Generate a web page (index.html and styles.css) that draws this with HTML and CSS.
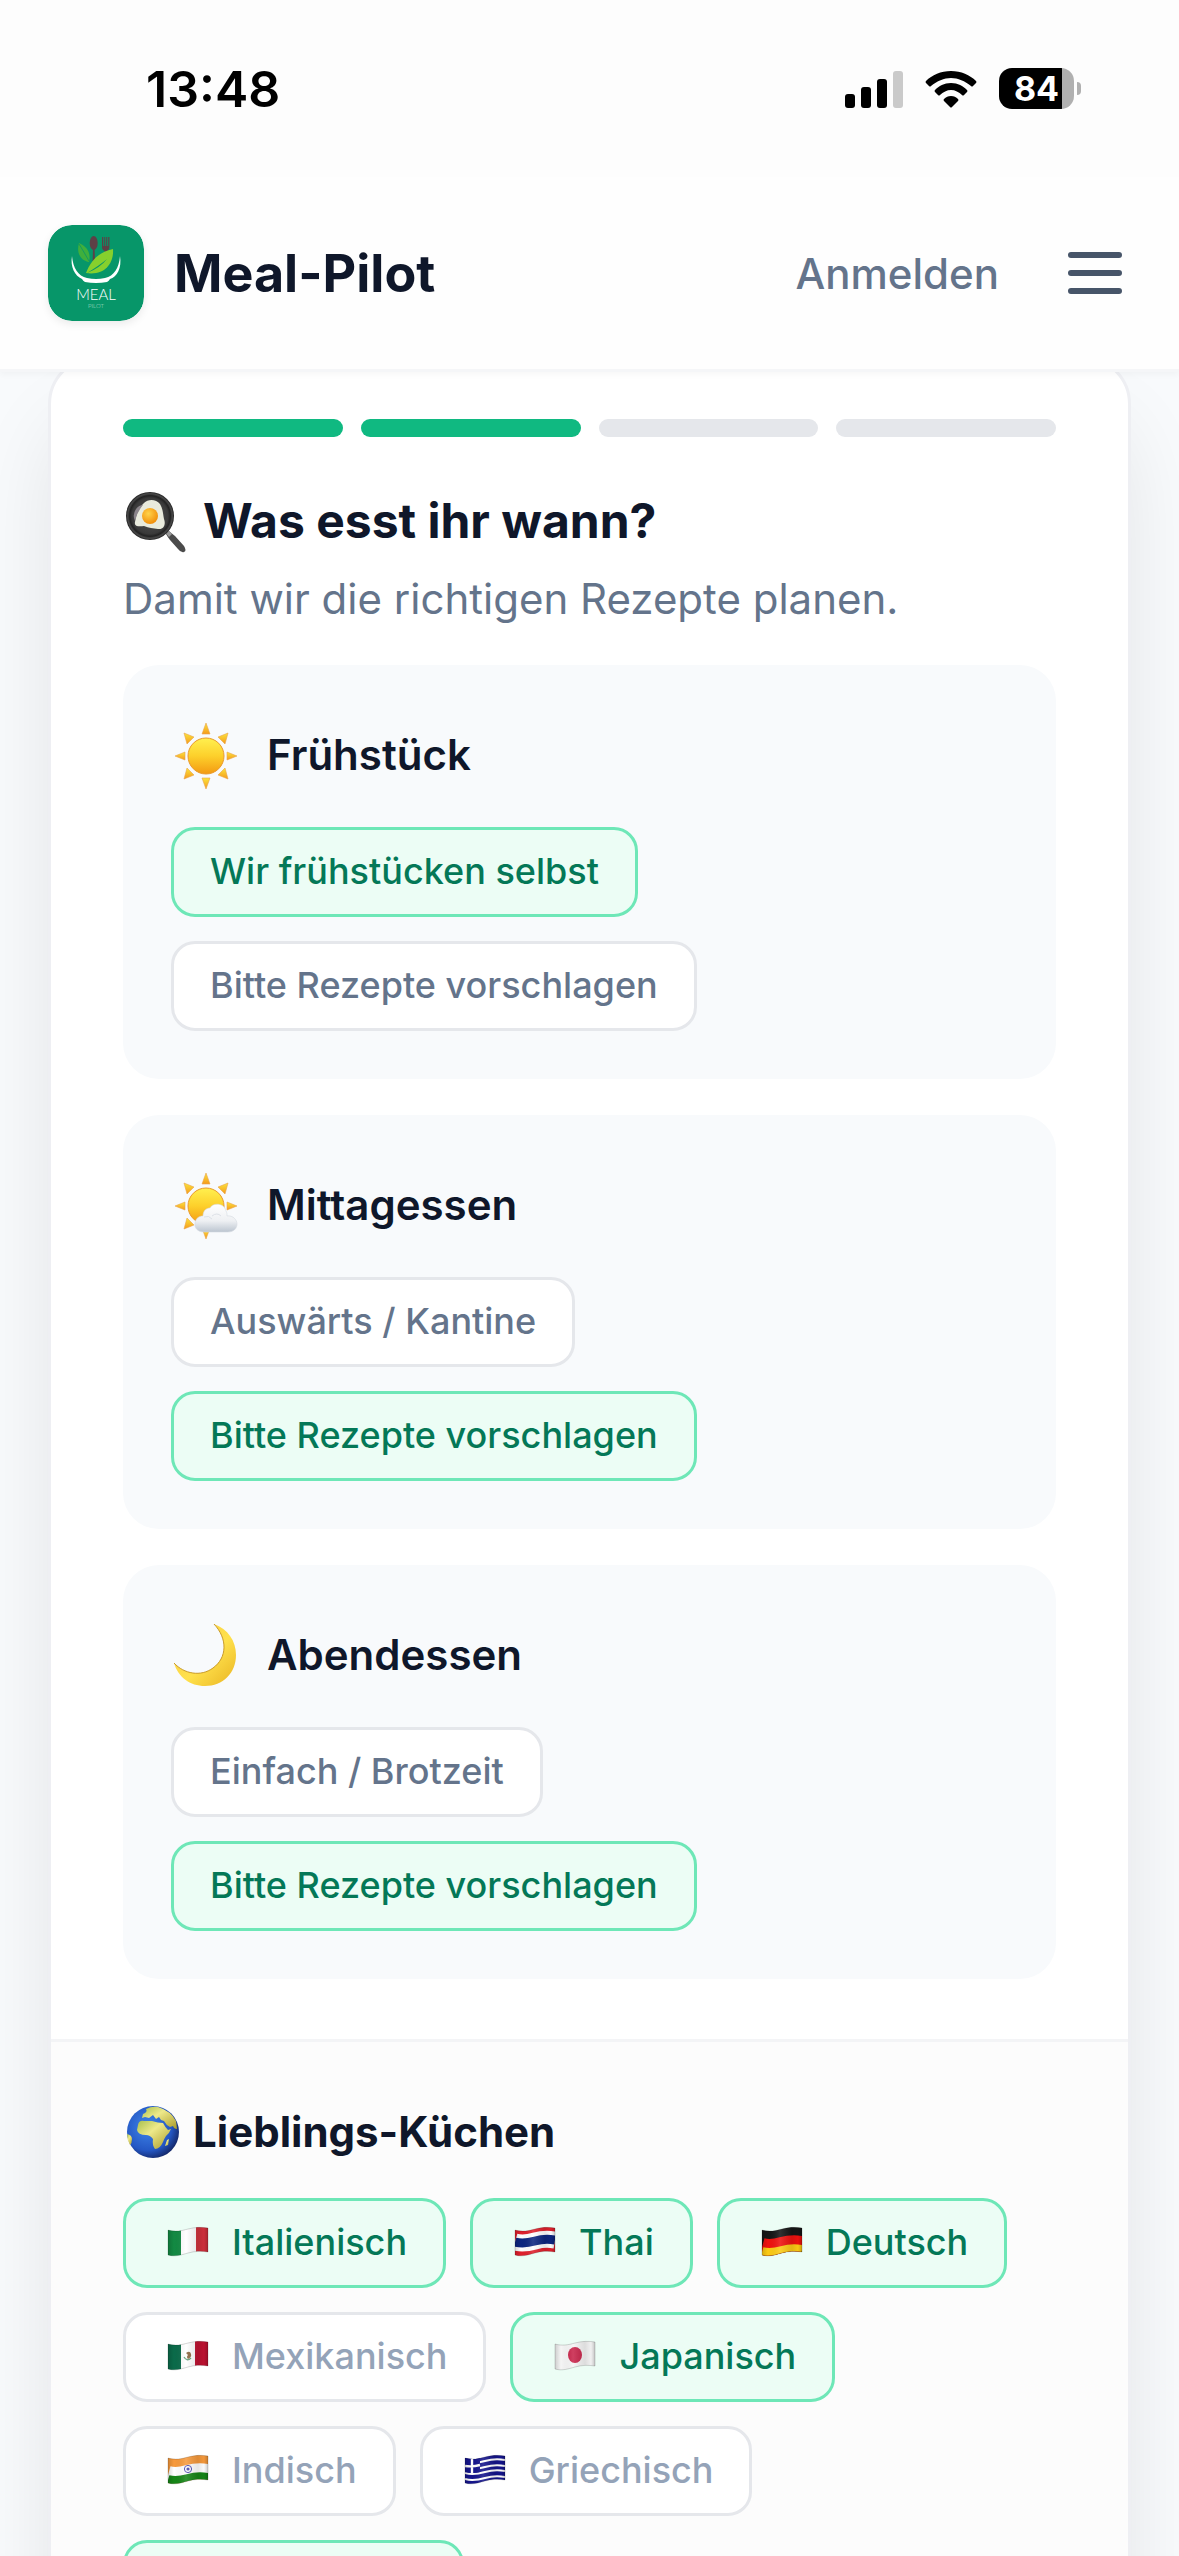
FILE: index.html
```html
<!DOCTYPE html>
<html lang="de">
<head>
<meta charset="UTF-8" />
<meta name="viewport" content="width=device-width, initial-scale=1" />
<title>Meal-Pilot</title>
<link rel="stylesheet" href="styles.css">
</head>
<body>

<!-- shared gradients and the waving flag shape -->
<svg class="defs" width="0" height="0" aria-hidden="true">
  <defs>
    <linearGradient id="sunFill" x1="0" y1="0" x2="0" y2="1">
      <stop offset="0" stop-color="#fff04f"/>
      <stop offset="0.5" stop-color="#fdd02b"/>
      <stop offset="1" stop-color="#f39a12"/>
    </linearGradient>
    <linearGradient id="rayFill" x1="0" y1="0" x2="0" y2="1">
      <stop offset="0" stop-color="#fbe53c"/>
      <stop offset="1" stop-color="#f59a1c"/>
    </linearGradient>
    <linearGradient id="cloudFill" x1="0" y1="0" x2="0" y2="1">
      <stop offset="0" stop-color="#ffffff"/>
      <stop offset="0.6" stop-color="#eef0f3"/>
      <stop offset="1" stop-color="#bcc5d0"/>
    </linearGradient>
    <linearGradient id="moonFill" x1="0" y1="0" x2="1" y2="1">
      <stop offset="0" stop-color="#f6c944"/>
      <stop offset="0.55" stop-color="#ffe14c"/>
      <stop offset="1" stop-color="#e9b422"/>
    </linearGradient>
    <radialGradient id="panFill">
      <stop offset="0" stop-color="#555"/>
      <stop offset="0.75" stop-color="#3a3a3a"/>
      <stop offset="0.85" stop-color="#222"/>
      <stop offset="0.93" stop-color="#4a4a4a"/>
      <stop offset="1" stop-color="#1c1c1c"/>
    </radialGradient>
    <radialGradient id="yolkFill" cx="0.4" cy="0.35" r="0.7">
      <stop offset="0" stop-color="#ffd34a"/>
      <stop offset="1" stop-color="#f08a06"/>
    </radialGradient>
    <radialGradient id="seaFill" cx="0.4" cy="0.4" r="0.65">
      <stop offset="0" stop-color="#3f86ea"/>
      <stop offset="0.7" stop-color="#2457c4"/>
      <stop offset="1" stop-color="#132564"/>
    </radialGradient>
    <linearGradient id="landFill" x1="0" y1="0" x2="1" y2="1">
      <stop offset="0" stop-color="#a9c04f"/>
      <stop offset="0.4" stop-color="#eee98a"/>
      <stop offset="1" stop-color="#a99a28"/>
    </linearGradient>
    <linearGradient id="flagShade" x1="0" y1="0" x2="1" y2="0">
      <stop offset="0" stop-color="#000" stop-opacity="0.16"/>
      <stop offset="0.15" stop-color="#000" stop-opacity="0"/>
      <stop offset="0.45" stop-color="#fff" stop-opacity="0.12"/>
      <stop offset="0.75" stop-color="#000" stop-opacity="0.1"/>
      <stop offset="0.9" stop-color="#000" stop-opacity="0.02"/>
      <stop offset="1" stop-color="#000" stop-opacity="0.2"/>
    </linearGradient>
    <path id="flagShape" d="M6 6C13 8 19 7 26 5S40 3 46 4V28C40 27 33 27 26 29S13 33 6 31Z"/>
    <clipPath id="flagClip"><use href="#flagShape"/></clipPath>
    <path id="wave" d="M6 0C13 2 19 1 26 -1S40 -3 46 -2" fill="none"/>
    <g id="shade" fill="url(#flagShade)" stroke="#000" stroke-opacity="0.2" stroke-width="0.8">
      <use href="#flagShape"/>
    </g>
    <g id="rays" fill="url(#rayFill)" stroke="#e9a24a" stroke-width="0.6">
      <path d="M36 4L40 15H32Z"/>
      <path d="M36 70L32 59H40Z"/>
      <path d="M5 37L15 33V41Z"/>
      <path d="M67 37L57 33V41Z"/>
      <path d="M14 14L24 18L17 25Z"/>
      <path d="M58 14L55 25L48 18Z"/>
      <path d="M14 60L17 49L24 56Z"/>
      <path d="M58 60L48 56L55 49Z"/>
    </g>
  </defs>
</svg>

<div class="app">
  <div class="statusbar">
    <span class="time">13:48</span>
    <div class="status-icons">
      <svg width="58" height="38" viewBox="0 0 58 38" aria-hidden="true">
        <rect x="0" y="24" width="10" height="14" rx="3"/>
        <rect x="16" y="17" width="10" height="21" rx="3"/>
        <rect x="32" y="9" width="10" height="29" rx="3"/>
        <rect x="48" y="1" width="10" height="37" rx="3" fill="#cacaca"/>
      </svg>
      <svg width="52" height="38" viewBox="0 0 52 38" aria-hidden="true">
        <path d="M26 1C36 1 45 5 51 11Q52 12 51 13L48 16Q47 17 46 16C40 11 33 8 26 8S12 11 6 16Q5 17 4 16L1 13Q0 12 1 11C7 5 16 1 26 1Z"/>
        <path d="M26 13C33 13 38 16 42 20Q43 21 42 22L39 25Q38 26 37 25C34 22 30 20 26 20S18 22 15 25Q14 26 13 25L10 22Q9 21 10 20C14 16 19 13 26 13Z"/>
        <path d="M26 26C29 26 31 27 33 29Q34 30 33 31L27 37Q26 38 25 37L19 31Q18 30 19 29C21 27 23 26 26 26Z"/>
      </svg>
      <div class="battery"><span class="battery-level">84</span></div>
    </div>
  </div>

  <header class="header">
    <a href="#" class="brand">
      <svg class="logo" viewBox="0 0 96 96" aria-hidden="true">
        <rect width="96" height="96" rx="24" fill="#079669"/>
        <g fill="#5d4046">
          <ellipse cx="45.7" cy="18" rx="4" ry="7"/>
          <path d="M45 24H46.6L47 36H44.6Z"/>
          <path d="M54 12H55.2V21H56.2V12H57.2V21H58.2V12H59.2V21H60.2V12H61.4V22Q61.4 25 58.6 26L59 32H56.4L56.8 26Q54 25 54 22Z"/>
        </g>
        <path d="M31 18C40 22 43 29 41 37C33 36 28 28 31 18Z" fill="#3faf3c"/>
        <path d="M31 19Q36 27 41 36" stroke="#079669" stroke-width="0.8" fill="none"/>
        <path d="M65 24C66 37 58 51 38 48C43 35 51 27 65 24Z" fill="#86d02d"/>
        <path d="M39 48Q52 43 59 34Q52 40 39 48Z" fill="#079669"/>
        <path d="M24 31C25 43 30 51 39 53Q48 55 57 53C66 51 71 43 72 31C74 43 69 52 62 54Q61 56 59 57Q48 59 37 57Q35 56 34 54C27 51 22 42 24 31Z" fill="#fff"/>
        <text x="48" y="75" class="logo-name">MEAL</text>
        <text x="48" y="83" class="logo-sub">PILOT</text>
      </svg>
      <span class="brand-name">Meal-Pilot</span>
    </a>
    <nav class="nav">
      <a href="#" class="login">Anmelden</a>
      <button type="button" class="menu-btn" aria-label="Menü">
        <svg width="72" height="72" viewBox="0 0 24 24" aria-hidden="true">
          <path d="M4 6h16M4 12h16M4 18h16" stroke="#475569" stroke-width="2" stroke-linecap="round"/>
        </svg>
      </button>
    </nav>
  </header>

  <main class="main">
    <div class="card">
      <section class="step">
        <div class="progress">
          <div class="bar done"></div>
          <div class="bar done"></div>
          <div class="bar"></div>
          <div class="bar"></div>
        </div>

        <h2 class="title">
          <svg width="66" height="66" viewBox="0 0 66 66" aria-hidden="true">
            <path d="M43 46L46 43Q48 45 52 48L61 58Q64 63 61 64Q58 65 55 61L47 52Q44 48 43 46Z" fill="#4b4b4b"/>
            <path d="M42 44L45 42L49 46L46 49Z" fill="#999"/>
            <circle cx="27" cy="28" r="24" fill="url(#panFill)"/>
            <path d="M12 34C13 24 18 18 21 15C25 11 33 11 37 16C40 21 40 26 41 31C43 36 41 42 35 41C30 40 26 40 21 38C15 39 11 38 12 34Z" fill="#e9ebdd"/>
            <path d="M20 17Q14 24 12 33Q9 27 13 21Q16 17 20 17Z" fill="#8b858b"/>
            <circle cx="27" cy="28" r="8" fill="url(#yolkFill)"/>
          </svg>
          Was esst ihr wann?
        </h2>
        <p class="subtitle">Damit wir die richtigen Rezepte planen.</p>

        <div class="meals">
          <div class="meal">
            <h3 class="meal-name">
              <svg width="72" height="72" viewBox="1 0 72 72" aria-hidden="true">
                <use href="#rays"/>
                <circle cx="36" cy="37" r="18" fill="url(#sunFill)" stroke="#ea9a2c" stroke-width="1"/>
              </svg>
              Frühstück
            </h3>
            <div class="options">
              <button type="button" class="chip active" aria-pressed="true">Wir frühstücken selbst</button>
              <button type="button" class="chip" aria-pressed="false">Bitte Rezepte vorschlagen</button>
            </div>
          </div>

          <div class="meal">
            <h3 class="meal-name">
              <svg width="72" height="72" viewBox="1 0 72 72" aria-hidden="true">
                <use href="#rays"/>
                <circle cx="36" cy="37" r="18" fill="url(#sunFill)" stroke="#ea9a2c" stroke-width="1"/>
                <path d="M34 63C27 63 24 58 25 54C26 49 29 47 33 47C33 41 37 39 40 39C42 34 54 33 56 42C57 44 57 45 57 47C63 46 67 51 67 55C67 60 63 63 58 63Z" fill="url(#cloudFill)" stroke="#d5dae1" stroke-width="0.6"/>
                <path d="M34 48Q39 46 42 50M42 47Q47 43 51 47" stroke="#dde1e7" stroke-width="1" fill="none"/>
              </svg>
              Mittagessen
            </h3>
            <div class="options">
              <button type="button" class="chip" aria-pressed="false">Auswärts / Kantine</button>
              <button type="button" class="chip active" aria-pressed="true">Bitte Rezepte vorschlagen</button>
            </div>
          </div>

          <div class="meal">
            <h3 class="meal-name">
              <svg width="72" height="72" viewBox="1 0 72 72" aria-hidden="true">
                <path d="M44 5C58 10 66 22 66 36C66 54 53 67 35 67C20 67 8 58 4 44C14 55 31 58 43 49C57 39 58 20 44 5Z" fill="url(#moonFill)"/>
                <path d="M44 5C58 20 57 39 43 49C31 58 14 55 4 44" fill="none" stroke="#c99a2a" stroke-width="1"/>
              </svg>
              Abendessen
            </h3>
            <div class="options">
              <button type="button" class="chip" aria-pressed="false">Einfach / Brotzeit</button>
              <button type="button" class="chip active" aria-pressed="true">Bitte Rezepte vorschlagen</button>
            </div>
          </div>
        </div>
      </section>

      <section class="cuisines">
        <h3 class="cuisines-title">
          <svg width="58" height="58" viewBox="0 0 58 58" aria-hidden="true">
            <circle cx="30" cy="29" r="26" fill="url(#seaFill)"/>
            <g fill="url(#landFill)">
              <path d="M15 22Q16 17 21 18L29 18Q35 20 40 20Q42 24 45 27L48 26Q46 31 43 33Q41 36 40 39Q37 46 32 46Q29 42 30 36Q27 32 23 32Q15 32 14 27Z"/>
              <path d="M19 15L20 11Q25 9 23 6Q29 3 35 4Q48 8 53 18L54 26Q51 26 50 23L47 24Q43 22 41 18L38 17L36 14L33 16L30 12L26 15L22 14Z"/>
              <path d="M4 31Q9 32 9 36Q9 40 7 42Q4 37 4 31Z"/>
              <path d="M44 37L46 36L45 42L42 43Z"/>
            </g>
          </svg>
          Lieblings-Küchen
        </h3>
        <div class="chips">
          <button type="button" class="chip active" aria-pressed="true">
            <svg class="flag" viewBox="0 0 50 36" aria-hidden="true">
              <g clip-path="url(#flagClip)">
                <rect x="6" width="13" height="36" fill="#138a43"/>
                <rect x="19" width="15" height="36" fill="#fff"/>
                <rect x="34" width="12" height="36" fill="#cf2f3b"/>
              </g>
              <use href="#shade"/>
            </svg>
            Italienisch
          </button>
          <button type="button" class="chip active" aria-pressed="true">
            <svg class="flag" viewBox="0 0 50 36" aria-hidden="true">
              <g clip-path="url(#flagClip)">
                <rect x="6" width="40" height="36" fill="#e0202c"/>
                <use href="#wave" y="18" stroke="#fff" stroke-width="17"/>
                <use href="#wave" y="18" stroke="#0d2680" stroke-width="9"/>
              </g>
              <use href="#shade"/>
            </svg>
            Thai
          </button>
          <button type="button" class="chip active" aria-pressed="true">
            <svg class="flag" viewBox="0 0 50 36" aria-hidden="true">
              <g clip-path="url(#flagClip)">
                <rect x="6" width="40" height="36" fill="#161616"/>
                <use href="#wave" y="23" stroke="#f0120f" stroke-width="18"/>
                <use href="#wave" y="28" stroke="#fccb14" stroke-width="10"/>
              </g>
              <use href="#shade"/>
            </svg>
            Deutsch
          </button>
          <button type="button" class="chip muted" aria-pressed="false">
            <svg class="flag" viewBox="0 0 50 36" aria-hidden="true">
              <g clip-path="url(#flagClip)">
                <rect x="6" width="13" height="36" fill="#0b6b4a"/>
                <rect x="19" width="14" height="36" fill="#fff"/>
                <rect x="33" width="13" height="36" fill="#be1231"/>
              </g>
              <path d="M22 19Q25 24 29 20" stroke="#66a07c" stroke-width="1.4" fill="none"/>
              <path d="M24 15Q28 12 29 16Q30 19 26 21Q24 19 26 17Z" fill="#8d6640"/>
              <use href="#shade"/>
            </svg>
            Mexikanisch
          </button>
          <button type="button" class="chip active" aria-pressed="true">
            <svg class="flag" viewBox="0 0 50 36" aria-hidden="true">
              <use href="#flagShape" fill="#f5f5f5"/>
              <ellipse cx="26" cy="17" rx="7" ry="8" fill="#c9254b"/>
              <use href="#shade"/>
            </svg>
            Japanisch
          </button>
          <button type="button" class="chip muted" aria-pressed="false">
            <svg class="flag" viewBox="0 0 50 36" aria-hidden="true">
              <g clip-path="url(#flagClip)">
                <rect x="6" width="40" height="36" fill="#f79a3c"/>
                <use href="#wave" y="23" stroke="#fff" stroke-width="18"/>
                <use href="#wave" y="28" stroke="#168617" stroke-width="10"/>
              </g>
              <circle cx="26" cy="17" r="3.6" fill="none" stroke="#4a48b0" stroke-width="1"/>
              <circle cx="26" cy="17" r="1.6" fill="#4a48b0"/>
              <use href="#shade"/>
            </svg>
            Indisch
          </button>
          <button type="button" class="chip muted" aria-pressed="false">
            <svg class="flag" viewBox="0 0 50 36" aria-hidden="true">
              <g clip-path="url(#flagClip)">
                <rect x="6" width="40" height="36" fill="#14148c"/>
                <g stroke="#fff" stroke-width="2">
                  <use href="#wave" y="10"/>
                  <use href="#wave" y="16"/>
                  <use href="#wave" y="21"/>
                  <use href="#wave" y="27"/>
                </g>
                <path d="M6 4H21V20Q14 22 6 20Z" fill="#14148c"/>
                <path d="M6 14Q14 15 21 13M13 5V22" stroke="#fff" stroke-width="2.4"/>
              </g>
              <use href="#shade"/>
            </svg>
            Griechisch
          </button>
          <button type="button" class="chip active" aria-pressed="true">
            <svg class="flag" viewBox="0 0 50 36" aria-hidden="true">
              <use href="#flagShape" fill="#f5f5f5"/>
              <path d="M20 18A6 6 0 0 1 32 17Z" fill="#cd2e3a"/>
              <path d="M20 18A6 6 0 0 0 32 17Z" fill="#0047a0"/>
              <use href="#shade"/>
            </svg>
            Koreanisch
          </button>
        </div>
      </section>
    </div>
  </main>
</div>

<script>
  // Auswahl umschalten
  document.querySelectorAll(".chips .chip").forEach(chip => {
    chip.onclick = () => {
      const on = chip.classList.toggle("active");
      chip.classList.toggle("muted", !on);
      chip.setAttribute("aria-pressed", on);
    };
  });

  document.querySelectorAll(".options").forEach(group => {
    const chips = group.querySelectorAll(".chip");
    chips.forEach(chip => {
      chip.onclick = () => {
        chips.forEach(c => {
          c.classList.toggle("active", c === chip);
          c.setAttribute("aria-pressed", c === chip);
        });
      };
    });
  });
</script>
</body>
</html>
```
FILE: styles.css
```css
* {
  box-sizing: border-box;
}
body {
  margin: 0;
  font-family: Inter, "Liberation Sans", sans-serif;
  font-size: 42px;
  color: #0f172a;
  background: #f8fafc;
}
h2, h3, p {
  margin: 0;
}
a {
  color: inherit;
  text-decoration: none;
}
button {
  font-family: inherit;
  cursor: pointer;
}
svg {
  display: block;
  flex: none;
}
.defs {
  position: absolute;
}
.app {
  height: 100vh;
  overflow: hidden;
}

/* status bar */
.statusbar {
  display: flex;
  justify-content: space-between;
  align-items: center;
  height: 177px;
  padding: 0 98px 0 146px;
  background: #fdfdfd;
  color: #000;
  position: relative;
  z-index: 2;
}
.time {
  font-size: 50px;
  font-weight: 600;
}
.status-icons {
  display: flex;
  align-items: center;
  gap: 22px;
}
.battery {
  display: flex;
  align-items: center;
  gap: 3px;
}
.battery::after {
  content: "";
  width: 4px;
  height: 13px;
  border-radius: 0 4px 4px 0;
  background: #b0b0b0;
}
.battery-level {
  width: 75px;
  height: 41px;
  border-radius: 13px;
  background: linear-gradient(to right, #000 84%, #b0b0b0 84%);
  color: #fff;
  font-size: 34px;
  font-weight: 700;
  line-height: 41px;
  text-align: center;
}

/* header */
.header {
  display: flex;
  justify-content: space-between;
  align-items: center;
  padding: 48px;
  background: #fefefe;
  border-bottom: 3px solid #f5f6f8;
  box-shadow: 0 3px 6px rgba(0, 0, 0, 0.03);
  position: relative;
  z-index: 1;
}
.brand {
  display: flex;
  align-items: center;
  gap: 30px;
}
.logo {
  width: 96px;
  height: 96px;
  border-radius: 24px;
  box-shadow: 0 3px 9px rgba(0, 0, 0, 0.08);
}
.logo-name {
  font-family: Lato, sans-serif;
  font-size: 15px;
  font-weight: 300;
  fill: #fff;
  text-anchor: middle;
}
.logo-sub {
  font-family: Lato, sans-serif;
  font-size: 6px;
  font-weight: 300;
  fill: #b9e0d2;
  text-anchor: middle;
}
.brand-name {
  font-size: 52px;
  font-weight: 700;
}
.nav {
  display: flex;
  align-items: center;
  gap: 60px;
}
.login {
  color: #64748b;
  font-weight: 500;
}
.menu-btn {
  padding: 0;
  border: none;
  background: none;
}

/* card */
.main {
  margin-top: -16px;
  padding: 0 48px;
}
.card {
  border: 3px solid #eeeff3;
  border-radius: 48px;
  background: #fff;
  box-shadow: 0 60px 90px -12px rgba(0, 0, 0, 0.11);
  overflow: hidden;
}
.step {
  padding: 60px 72px;
}
.progress {
  display: flex;
  gap: 18px;
  margin-bottom: 48px;
}
.bar {
  flex: 1;
  height: 18px;
  border-radius: 9px;
  background: #e5e7eb;
}
.bar.done {
  background: #10b981;
}
.title {
  display: flex;
  align-items: center;
  gap: 14px;
  font-size: 48px;
  font-weight: 700;
  line-height: 72px;
}
.subtitle {
  margin: 12px 0 36px;
  line-height: 60px;
  color: #64748b;
}

/* meals */
.meals {
  display: grid;
  gap: 36px;
}
.meal {
  padding: 48px;
  border-radius: 36px;
  background: #f8fafc;
}
.meal-name {
  display: flex;
  align-items: center;
  gap: 24px;
  margin-bottom: 30px;
  font-size: 42px;
  font-weight: 600;
  line-height: 84px;
}
.options {
  display: flex;
  flex-direction: column;
  align-items: flex-start;
  gap: 24px;
}
.chip {
  display: flex;
  align-items: center;
  gap: 20px;
  padding: 17px 36px 19px;
  border: 3px solid #e5e7eb;
  border-radius: 24px;
  background: #fff;
  color: #64748b;
  font-size: 36px;
  font-weight: 500;
  line-height: 48px;
}
.chip.muted {
  color: #94a3b8;
}
.chip.active {
  border-color: #6ee7b7;
  background: #ecfdf5;
  color: #047857;
}

/* cuisines */
.cuisines {
  padding: 48px 72px 72px;
  border-top: 3px solid #f3f4f6;
  background: #fcfcfc;
}
.cuisines-title {
  display: flex;
  align-items: center;
  gap: 12px;
  margin-bottom: 24px;
  font-size: 42px;
  font-weight: 700;
  line-height: 84px;
}
.chips {
  display: flex;
  flex-wrap: wrap;
  gap: 24px;
}
.flag {
  width: 50px;
  height: 36px;
}
```
